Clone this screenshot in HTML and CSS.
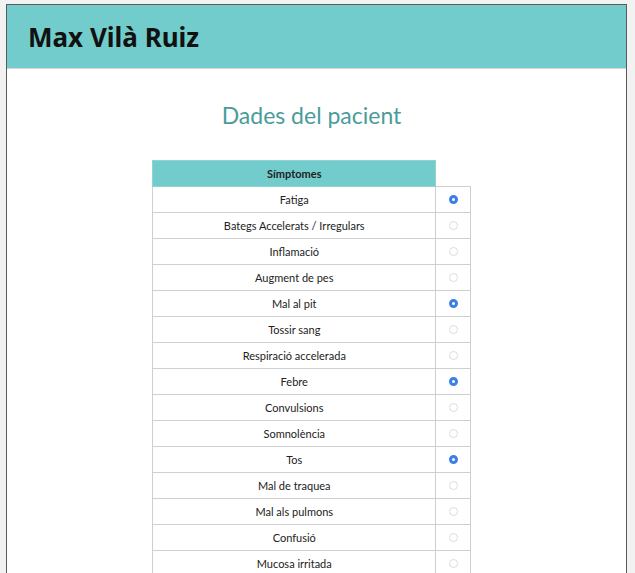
FILE: index.html
```html
<!DOCTYPE html>
<html lang="ca">
<head>
    <meta charset="UTF-8">
    <meta name="viewport" content="width=device-width, initial-scale=1.0">
    <title>Dades del pacient</title>
    <link rel="stylesheet" href="styles.css">
</head>
<body>
    <div class="frame">
        <div class="header"><h1>Max Vilà Ruiz</h1></div>
        <div class="content">
            <h2 class="title">Dades del pacient</h2>
            <table class="symptoms">
                <thead>
                    <tr><th class="head">Símptomes</th><th class="blank"></th></tr>
                </thead>
                <tbody>
                    <tr><td class="name">Fatiga</td><td class="check"><span class="radio on"></span></td></tr>
                    <tr><td class="name">Bategs Accelerats / Irregulars</td><td class="check"><span class="radio"></span></td></tr>
                    <tr><td class="name">Inflamació</td><td class="check"><span class="radio"></span></td></tr>
                    <tr><td class="name">Augment de pes</td><td class="check"><span class="radio"></span></td></tr>
                    <tr><td class="name">Mal al pit</td><td class="check"><span class="radio on"></span></td></tr>
                    <tr><td class="name">Tossir sang</td><td class="check"><span class="radio"></span></td></tr>
                    <tr><td class="name">Respiració accelerada</td><td class="check"><span class="radio"></span></td></tr>
                    <tr><td class="name">Febre</td><td class="check"><span class="radio on"></span></td></tr>
                    <tr><td class="name">Convulsions</td><td class="check"><span class="radio"></span></td></tr>
                    <tr><td class="name">Somnolència</td><td class="check"><span class="radio"></span></td></tr>
                    <tr><td class="name">Tos</td><td class="check"><span class="radio on"></span></td></tr>
                    <tr><td class="name">Mal de traquea</td><td class="check"><span class="radio"></span></td></tr>
                    <tr><td class="name">Mal als pulmons</td><td class="check"><span class="radio"></span></td></tr>
                    <tr><td class="name">Confusió</td><td class="check"><span class="radio"></span></td></tr>
                    <tr><td class="name">Mucosa irritada</td><td class="check"><span class="radio"></span></td></tr>
                </tbody>
            </table>
        </div>
    </div>
</body>
</html>
```

FILE: styles.css
```css
body {
    margin: 0;
    background-color: #f2f2f2;
    font-family: 'Noto Sans', 'Open Sans', sans-serif;
    color: #222;
    overflow: hidden;
    height: 100vh;
}
.frame {
    margin: 4px 8px 0 6px;
    border: 1px solid #5a5a5a;
    border-bottom: none;
    background-color: #fff;
    height: calc(100vh - 4px);
    box-sizing: border-box;
    overflow: hidden;
}
.header {
    background-color: #72cccb;
    height: 63px;
    display: flex;
    align-items: center;
    padding-left: 21px;
    border-bottom: 1px solid #d6d6d6;
}
.header h1 {
    margin: 0;
    font-size: 26px;
    font-weight: bold;
    color: #111;
}
.content {
    display: flex;
    flex-direction: column;
    align-items: center;
    padding-right: 10px;
}
.title {
    font-family: 'Lato', 'Noto Sans', sans-serif;
    font-weight: normal;
    font-size: 23px;
    color: #4a9c9b;
    margin: 32px 0 31px;
}
.symptoms {
    border-collapse: collapse;
    font-family: 'Lato', 'Noto Sans', sans-serif;
    font-size: 11px;
}
.head {
    background-color: #72cccb;
    width: 282px;
    height: 25px;
    padding: 0;
    font-weight: bold;
    font-size: 11px;
    border: 1px solid #8fd3d2;
}
.blank {
    width: 34px;
    padding: 0;
}
.name {
    text-align: center;
    height: 25px;
    padding: 0;
    border: 1px solid #cfcfcf;
}
.check {
    padding: 0 0 1px;
    line-height: 0;
    text-align: center;
    border: 1px solid #cfcfcf;
}
.radio {
    display: inline-block;
    box-sizing: border-box;
    width: 9px;
    height: 9px;
    border-radius: 50%;
    border: 1px solid #dcdcdc;
}
.radio.on {
    background-color: #fff;
    border: 3px solid #3c7fe6;
}
```
